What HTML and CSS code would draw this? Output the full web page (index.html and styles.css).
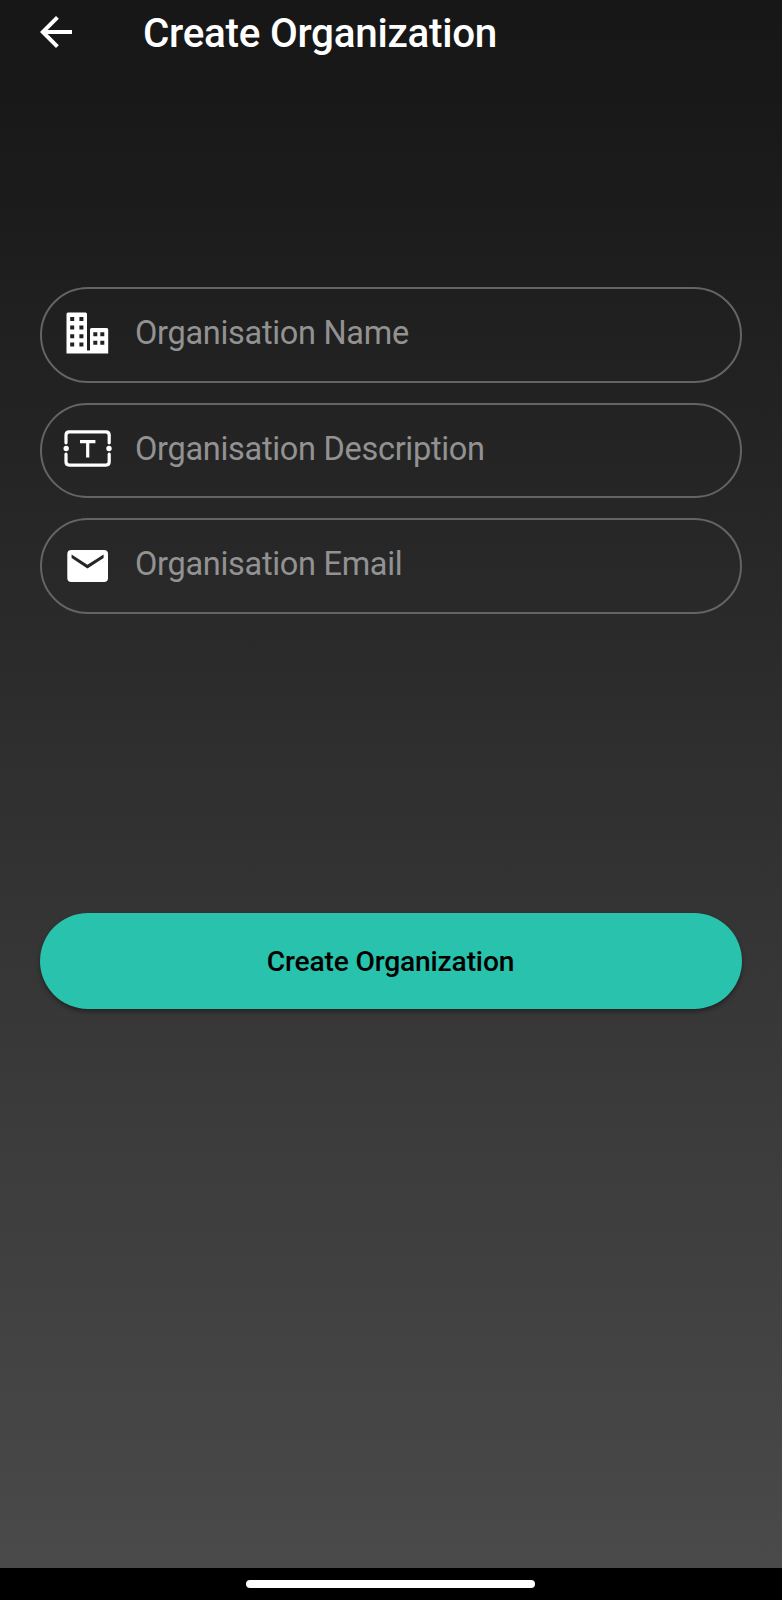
FILE: index.html
```html
<!DOCTYPE html>
<html lang="en">
<head>
<meta charset="utf-8">
<title>Create Organization</title>
<link rel="stylesheet" href="styles.css">
</head>
<body>
<div class="screen">
  <header class="appbar">
    <svg class="back" viewBox="0 0 24 24"><path d="M20 11H7.83l5.59-5.59L12 4l-8 8 8 8 1.41-1.41L7.83 13H20v-2z"/></svg>
    <h1 class="title">Create Organization</h1>
  </header>
  <main class="content">
    <form class="form">
      <div class="field">
        <svg class="icon" viewBox="0 0 48 48"><path fill-rule="evenodd" d="M4 3.500h17.500q1.500 0 1.500 1.500v36.500h3v-21q0-1.500 1.500-1.500h15.200q1.500 0 1.500 1.500v24h-41.700v-39.500q0-1.500 1.500-1.500zM6.200 8v4h4v-4zM15.400 8v4h4v-4zM6.200 16.500v4h4v-4zM15.400 16.500v4h4v-4zM6.200 25.200v4h4v-4zM15.400 25.200v4h4v-4zM6.200 33.500v4h4v-4zM15.400 33.500v4h4v-4zM29.300 23.200v4h4v-4zM36.300 23.200v4h4v-4zM29.300 31.700v4h4v-4zM36.300 31.700v4h4v-4z"/></svg>
        <span class="label">Organisation Name</span>
      </div>
      <div class="field">
        <svg class="icon" viewBox="0 0 48 48"><g fill="none" stroke="#fff" stroke-width="3.200"><path d="M2 17.800v-7.600q0-3.300 3.300-3.300h36.600q3.300 0 3.300 3.300v7.600M2 29.200v7.600q0 3.300 3.300 3.300h36.600q3.300 0 3.300-3.300v-7.600" stroke-linecap="round"/><path d="M16 16.700h15.400M23.700 16.700v15.800"/></g><circle cx="2.200" cy="23.500" r="2.700"/><circle cx="45" cy="23.500" r="2.700"/></svg>
        <span class="label">Organisation Description</span>
      </div>
      <div class="field">
        <svg class="icon" viewBox="0 0 48 48"><rect x="3.300" y="9" width="40.700" height="32" rx="4"/><path d="M7.600 13.500l15.800 10.200 16.200-10.200v3.600l-16.200 10.500-15.800-10.500z" fill="#262626"/></svg>
        <span class="label">Organisation Email</span>
      </div>
    </form>
    <button class="submit" type="button">Create Organization</button>
  </main>
  <footer class="navbar"><div class="handle"></div></footer>
</div>
</body>
</html>
```
FILE: styles.css
```css
* { box-sizing: border-box; }
body { margin: 0; font-family: Roboto, sans-serif; }
.screen {
  height: 1600px;
  display: flex;
  flex-direction: column;
  background: #000;
}
.appbar {
  height: 287px;
  padding: 8px 32px 0;
  display: flex;
  align-items: flex-start;
  gap: 63px;
}
.appbar, .content {
  background: linear-gradient(#171717, #181818 6%, #1f1f1f 19%, #292929 38%, #343434 58%, #4a4a4a) 0 0 / 100% 1568px no-repeat;
}
.content { background-position: 0 -287px; }
.back { width: 48px; height: 48px; fill: #fff; flex: none; }
.title { margin: 0; padding-top: 1px; font-size: 40.4px; line-height: 50px; letter-spacing: -.27px; font-weight: 500; color: #fff; white-space: nowrap; }
.content { flex: 1; padding: 0 40px; }
.form { display: flex; flex-direction: column; gap: 20px; }
.field {
  height: 95.7px;
  padding: 0 22px;
  display: flex;
  align-items: center;
  gap: 23px;
  border: 2px solid #646464;
  border-radius: 48px;
}
.icon { width: 48px; height: 48px; margin-bottom: 3px; fill: #fff; flex: none; overflow: visible; }
.label { padding-bottom: 4px; font-size: 32.5px; line-height: 40px; letter-spacing: -.3px; color: #929292; white-space: nowrap; }
.submit {
  display: block;
  width: 100%;
  height: 95.500px;
  margin-top: 299px;
  padding: 2px 1px 0 0;
  border: 0;
  border-radius: 48px;
  background: #29c2ac;
  box-shadow: 0 3px 4px rgba(0, 0, 0, .35);
  font: 500 28.2px/40px Roboto, sans-serif;
  letter-spacing: -.17px;
  color: #000;
}
.navbar { height: 32px; padding: 12px 1px 0 0; display: flex; justify-content: center; align-items: flex-start; }
.handle { width: 289px; height: 8px; border-radius: 4px; background: #fff; }
```
